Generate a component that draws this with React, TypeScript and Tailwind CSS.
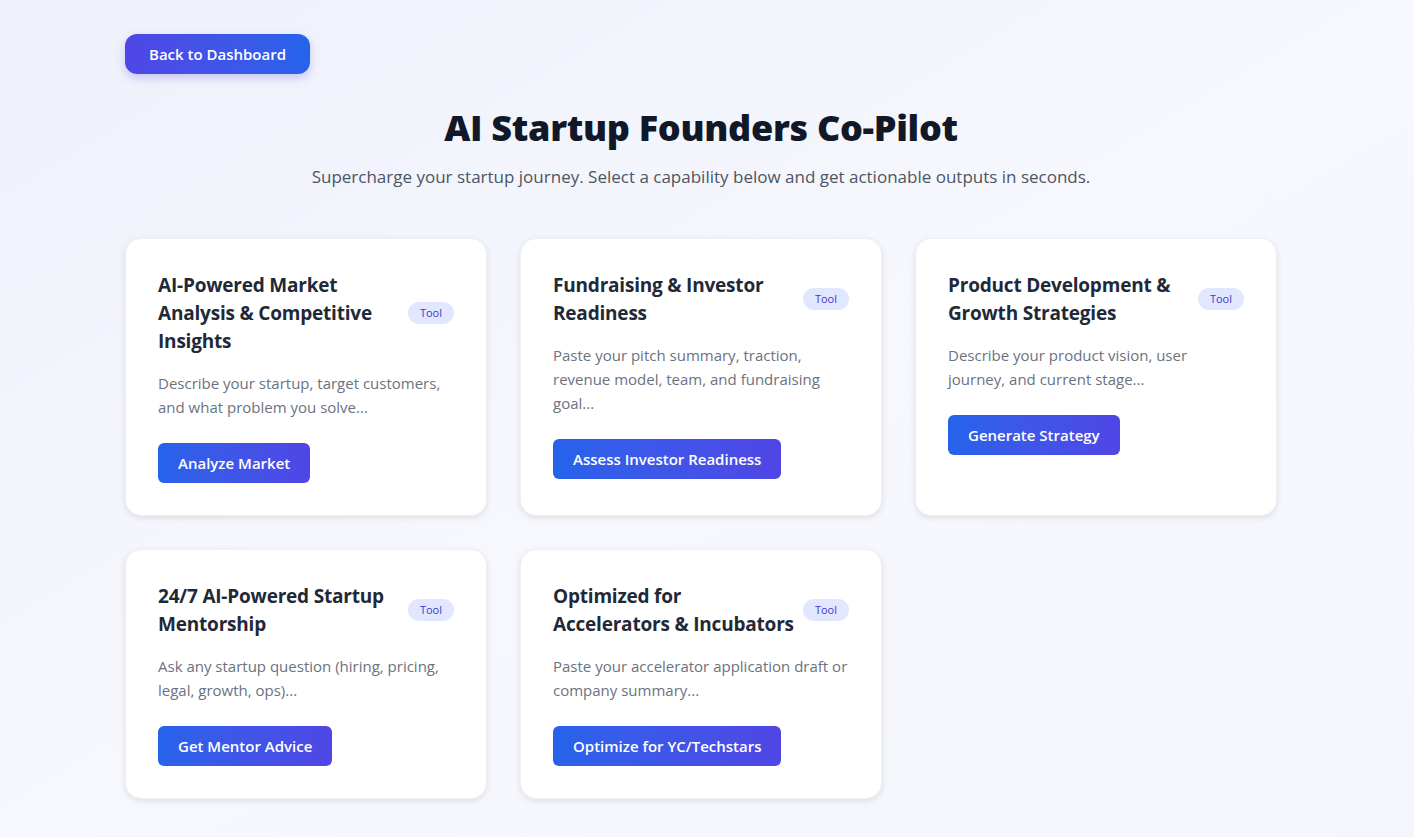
import React from "react";

const cards = [
  {
    title: "AI-Powered Market Analysis & Competitive Insights",
    desc: "Describe your startup, target customers, and what problem you solve...",
    btn: "Analyze Market",
  },
  {
    title: "Fundraising & Investor Readiness",
    desc: "Paste your pitch summary, traction, revenue model, team, and fundraising goal...",
    btn: "Assess Investor Readiness",
  },
  {
    title: "Product Development & Growth Strategies",
    desc: "Describe your product vision, user journey, and current stage...",
    btn: "Generate Strategy",
  },
  {
    title: "24/7 AI-Powered Startup Mentorship",
    desc: "Ask any startup question (hiring, pricing, legal, growth, ops)...",
    btn: "Get Mentor Advice",
  },
  {
    title: "Optimized for Accelerators & Incubators",
    desc: "Paste your accelerator application draft or company summary...",
    btn: "Optimize for YC/Techstars",
  },
];

export default function App() {
  return (
    <div
      className="min-h-[837px] w-full bg-gradient-to-br from-[#eef0fb] via-[#f7f8fd] to-[#f3f6fc] pr-[12px]"
      style={{ fontFamily: '"Open Sans", "Noto Sans", sans-serif' }}
    >
      <div className="mx-auto w-[1152px] pt-[34px] pb-10">
        <button className="h-10 rounded-xl bg-gradient-to-r from-[#4f46e5] to-[#2563eb] px-6 text-[15px] font-semibold text-white shadow-[0_4px_10px_rgba(79,70,229,0.25)]">
          Back to Dashboard
        </button>
        <h1 className="mt-[32px] text-center text-[36px] font-extrabold leading-[44px] text-[#111827] tracking-[-0.3px]">
          AI Startup Founders Co-Pilot
        </h1>
        <p className="mt-[13px] text-center text-[17px] leading-7 text-[#4b5563]">
          Supercharge your startup journey. Select a capability below and get actionable outputs in seconds.
        </p>
        <div className="mt-[47px] grid grid-cols-3 gap-x-[33px] gap-y-[33px]">
          {cards.map((c) => (
            <div
              key={c.title}
              className="flex flex-col rounded-2xl border border-[#eef0f4] bg-white p-8 shadow-[0_2px_6px_rgba(0,0,0,0.10)]"
            >
              <div className="flex items-center gap-1">
                <h2 className="flex-1 text-[19px] font-bold leading-7 text-[#1f2937] tracking-[-0.2px]">{c.title}</h2>
                <span className="shrink-0 rounded-full bg-[#e0e7ff] px-3 py-[3px] text-[11px] font-medium leading-4 text-[#4338ca]">
                  Tool
                </span>
              </div>
              <p className="mt-4 text-[15px] leading-6 text-[#6b7280]">{c.desc}</p>
              <div className="mt-6">
                <button className="h-10 rounded-md bg-gradient-to-r from-[#2563eb] to-[#4f46e5] px-5 text-[15px] font-semibold text-white">
                  {c.btn}
                </button>
              </div>
            </div>
          ))}
        </div>
      </div>
    </div>
  );
}
